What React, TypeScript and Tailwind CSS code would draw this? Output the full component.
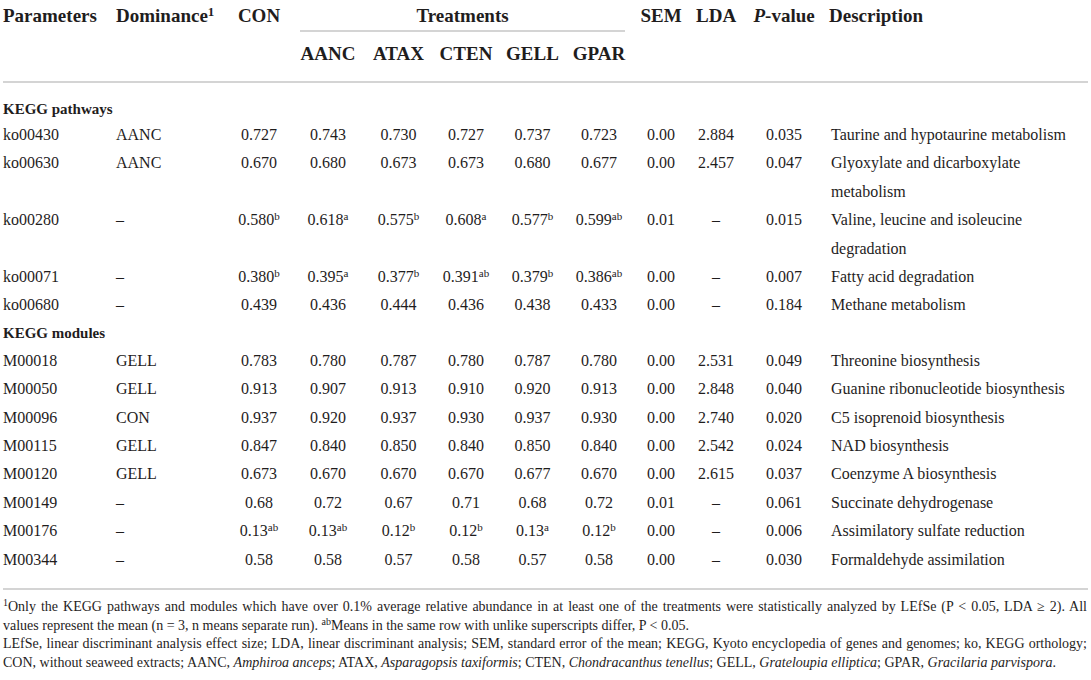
type Row = {
  id: string
  dom: string
  vals: string[]
  sem: string
  lda: string
  p: string
  desc: string[]
}

const pathways: Row[] = [
  { id: 'ko00430', dom: 'AANC', vals: ['0.727', '0.743', '0.730', '0.727', '0.737', '0.723'], sem: '0.00', lda: '2.884', p: '0.035', desc: ['Taurine and hypotaurine metabolism'] },
  { id: 'ko00630', dom: 'AANC', vals: ['0.670', '0.680', '0.673', '0.673', '0.680', '0.677'], sem: '0.00', lda: '2.457', p: '0.047', desc: ['Glyoxylate and dicarboxylate', 'metabolism'] },
  { id: 'ko00280', dom: '–', vals: ['0.580|b', '0.618|a', '0.575|b', '0.608|a', '0.577|b', '0.599|ab'], sem: '0.01', lda: '–', p: '0.015', desc: ['Valine, leucine and isoleucine', 'degradation'] },
  { id: 'ko00071', dom: '–', vals: ['0.380|b', '0.395|a', '0.377|b', '0.391|ab', '0.379|b', '0.386|ab'], sem: '0.00', lda: '–', p: '0.007', desc: ['Fatty acid degradation'] },
  { id: 'ko00680', dom: '–', vals: ['0.439', '0.436', '0.444', '0.436', '0.438', '0.433'], sem: '0.00', lda: '–', p: '0.184', desc: ['Methane metabolism'] },
]

const modules: Row[] = [
  { id: 'M00018', dom: 'GELL', vals: ['0.783', '0.780', '0.787', '0.780', '0.787', '0.780'], sem: '0.00', lda: '2.531', p: '0.049', desc: ['Threonine biosynthesis'] },
  { id: 'M00050', dom: 'GELL', vals: ['0.913', '0.907', '0.913', '0.910', '0.920', '0.913'], sem: '0.00', lda: '2.848', p: '0.040', desc: ['Guanine ribonucleotide biosynthesis'] },
  { id: 'M00096', dom: 'CON', vals: ['0.937', '0.920', '0.937', '0.930', '0.937', '0.930'], sem: '0.00', lda: '2.740', p: '0.020', desc: ['C5 isoprenoid biosynthesis'] },
  { id: 'M00115', dom: 'GELL', vals: ['0.847', '0.840', '0.850', '0.840', '0.850', '0.840'], sem: '0.00', lda: '2.542', p: '0.024', desc: ['NAD biosynthesis'] },
  { id: 'M00120', dom: 'GELL', vals: ['0.673', '0.670', '0.670', '0.670', '0.677', '0.670'], sem: '0.00', lda: '2.615', p: '0.037', desc: ['Coenzyme A biosynthesis'] },
  { id: 'M00149', dom: '–', vals: ['0.68', '0.72', '0.67', '0.71', '0.68', '0.72'], sem: '0.01', lda: '–', p: '0.061', desc: ['Succinate dehydrogenase'] },
  { id: 'M00176', dom: '–', vals: ['0.13|ab', '0.13|ab', '0.12|b', '0.12|b', '0.13|a', '0.12|b'], sem: '0.00', lda: '–', p: '0.006', desc: ['Assimilatory sulfate reduction'] },
  { id: 'M00344', dom: '–', vals: ['0.58', '0.58', '0.57', '0.58', '0.57', '0.58'], sem: '0.00', lda: '–', p: '0.030', desc: ['Formaldehyde assimilation'] },
]

function Val({ v }: { v: string }) {
  const [num, sup] = v.split('|')
  return (
    <>
      {num}
      {sup && <sup className="text-[11px]">{sup}</sup>}
    </>
  )
}

function DataRow({ r }: { r: Row }) {
  return (
    <tr className="align-top leading-[28.4px]">
      <td>{r.id}</td>
      <td className="pl-[6px]">{r.dom}</td>
      {r.vals.map((v, i) => (
        <td key={i} className="text-center">
          <Val v={v} />
        </td>
      ))}
      <td className="text-center">{r.sem}</td>
      <td className="text-center">{r.lda}</td>
      <td className="text-center">{r.p}</td>
      <td className="pl-[5px]">
        {r.desc.map((d, i) => (
          <div key={i}>{d}</div>
        ))}
      </td>
    </tr>
  )
}

const treatments = ['AANC', 'ATAX', 'CTEN', 'GELL', 'GPAR']

export default function App() {
  return (
    <div className="w-[1091px] h-[680px] bg-white text-[#1f1d1d] overflow-hidden">
      <div className="px-[3px] [font-family:Liberation_Serif,serif]">
        <table className="table-fixed w-[1085px] border-collapse text-[16px]">
          <colgroup>
            <col className="w-[107px]" />
            <col className="w-[116px]" />
            <col className="w-[66px]" />
            <col className="w-[72px]" />
            <col className="w-[69px]" />
            <col className="w-[66px]" />
            <col className="w-[67px]" />
            <col className="w-[66px]" />
            <col className="w-[58px]" />
            <col className="w-[52px]" />
            <col className="w-[84px]" />
            <col className="w-[262px]" />
          </colgroup>
          <thead className="text-[19px] font-bold">
            <tr className="h-[32px] leading-[28px] align-top">
              <th className="text-left pt-[2px]">Parameters</th>
              <th className="text-left pl-[6px] pt-[2px]">
                Dominance<sup className="text-[13px]">1</sup>
              </th>
              <th className="text-center pt-[2px]">CON</th>
              <th colSpan={5} className="p-0">
                <div className="ml-[8px] mr-[7px] h-[32px] pt-[2px] border-b-2 border-[#d4d4d4] text-center">Treatments</div>
              </th>
              <th className="text-center pt-[2px]">SEM</th>
              <th className="text-center pt-[2px]">LDA</th>
              <th className="text-center pt-[2px]">
                <i>P</i>-value
              </th>
              <th className="text-left pl-[3px] pt-[2px]">Description</th>
            </tr>
            <tr className="border-b-2 border-[#d4d4d4] leading-[28px]">
              <th className="h-[49px]" />
              <th />
              <th />
              {treatments.map((t) => (
                <th key={t} className="text-center pt-[8px] pb-[13px]">
                  {t}
                </th>
              ))}
              <th />
              <th />
              <th />
              <th />
            </tr>
          </thead>
          <tbody>
            <tr>
              <td colSpan={12} className="pt-[14px] leading-[24px] text-[15px] font-bold">
                KEGG pathways
              </td>
            </tr>
            {pathways.map((r) => (
              <DataRow key={r.id} r={r} />
            ))}
            <tr>
              <td colSpan={12} className="pt-px pb-[2px] leading-[24px] text-[15px] font-bold">
                KEGG modules
              </td>
            </tr>
            {modules.map((r) => (
              <DataRow key={r.id} r={r} />
            ))}
            <tr className="border-b-2 border-[#d4d4d4]">
              <td colSpan={12} className="h-[15px]" />
            </tr>
          </tbody>
        </table>

        {/* footnotes */}
        <div className="pt-[8px] text-[14px] leading-[18.5px] w-[1084px]">
          <div className="text-justify [text-align-last:justify]">
            <sup className="text-[10px]">1</sup>Only the KEGG pathways and modules which have over 0.1% average relative abundance in at least one of the treatments were statistically analyzed by LEfSe (P &lt; 0.05, LDA ≥ 2). All
          </div>
          <div>
            values represent the mean (n = 3, n means separate run). <sup className="text-[10px]">ab</sup>Means in the same row with unlike superscripts differ, P &lt; 0.05.
          </div>
          <div className="text-justify [text-align-last:justify]">
            LEfSe, linear discriminant analysis effect size; LDA, linear discriminant analysis; SEM, standard error of the mean; KEGG, Kyoto encyclopedia of genes and genomes; ko, KEGG orthology;
          </div>
          <div>
            CON, without seaweed extracts; AANC, <i>Amphiroa anceps</i>; ATAX, <i>Asparagopsis taxiformis</i>; CTEN, <i>Chondracanthus tenellus</i>; GELL, <i>Grateloupia elliptica</i>; GPAR, <i>Gracilaria parvispora</i>.
          </div>
        </div>
      </div>
    </div>
  )
}
